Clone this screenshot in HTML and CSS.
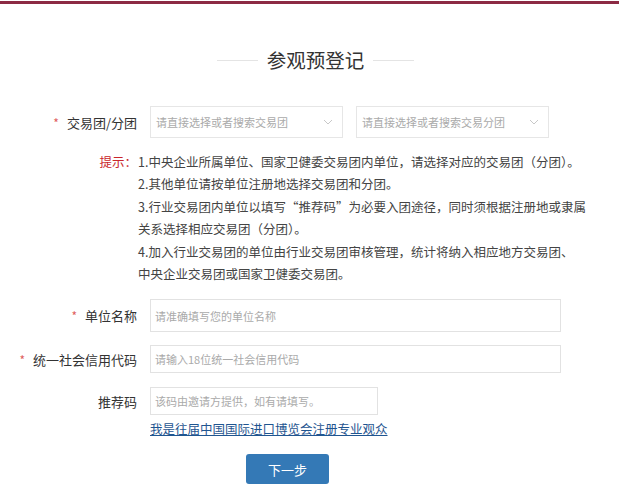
FILE: index.html
```
<!DOCTYPE html>
<html lang="zh-CN">
<head>
<meta charset="utf-8">
<title>参观预登记</title>
<link rel="stylesheet" href="styles.css">
</head>
<body>
<div class="topbar"></div>
<div class="title-wrap">
  <span class="title-line"></span>
  <h1 class="title">参观预登记</h1>
  <span class="title-line"></span>
</div>
<form class="form">
  <div class="row row-select">
    <label class="label"><span class="req">*</span>交易团/分团</label>
    <div class="select">
      <span class="ph">请直接选择或者搜索交易团</span>
      <svg class="chev" width="10" height="6" viewBox="0 0 10 6"><path d="M1 1 L5 5 L9 1" fill="none" stroke="#c8c8c8" stroke-width="1"/></svg>
    </div>
    <div class="select">
      <span class="ph">请直接选择或者搜索交易分团</span>
      <svg class="chev" width="10" height="6" viewBox="0 0 10 6"><path d="M1 1 L5 5 L9 1" fill="none" stroke="#c8c8c8" stroke-width="1"/></svg>
    </div>
  </div>
  <div class="tips">
    <div class="tips-label">提示：</div>
    <div class="tips-text">
      <p>1.中央企业所属单位、国家卫健委交易团内单位，请选择对应的交易团（分团）。</p>
      <p>2.其他单位请按单位注册地选择交易团和分团。</p>
      <p>3.行业交易团内单位以填写“推荐码”为必要入团途径，同时须根据注册地或隶属关系选择相应交易团（分团）。</p>
      <p>4.加入行业交易团的单位由行业交易团审核管理，统计将纳入相应地方交易团、<span class="nowrap">中央企业</span>交易团或国家卫健委交易团。</p>
    </div>
  </div>
  <div class="row row-name">
    <label class="label"><span class="req">*</span>单位名称</label>
    <div class="input input-wide input-tall"><span class="ph">请准确填写您的单位名称</span></div>
  </div>
  <div class="row row-code">
    <label class="label"><span class="req">*</span>统一社会信用代码</label>
    <div class="input input-wide"><span class="ph">请输入18位统一社会信用代码</span></div>
  </div>
  <div class="row row-ref">
    <label class="label">推荐码</label>
    <div class="input input-short"><span class="ph">该码由邀请方提供，如有请填写。</span></div>
  </div>
  <div class="link-row">
    <a class="link" href="#">我是往届中国国际进口博览会注册专业观众</a>
  </div>
  <div class="btn-row">
    <button type="button" class="btn">下一步</button>
  </div>
</form>
</body>
</html>
```
FILE: styles.css
```
html, body {
  margin: 0;
  padding: 0;
  background: #fff;
}
body {
  font-family: "Noto Sans CJK SC", "Noto Sans", "Liberation Sans", sans-serif;
  color: #333;
  width: 619px;
}
.topbar {
  margin-top: 1px;
  height: 3px;
  background: #8c2a44;
}
.title-wrap {
  margin-top: 44px;
  display: flex;
  justify-content: center;
  align-items: center;
  gap: 9px;
  padding-left: 12px;
}
.title-line {
  width: 41px;
  height: 1px;
  background: #e4e4e4;
}
.title {
  margin: 0;
  font-size: 19.5px;
  line-height: 24px;
  font-weight: 400;
  color: #333;
}
.form {
  margin-top: 34px;
}
.row {
  display: flex;
  align-items: center;
}
.label {
  box-sizing: border-box;
  width: 150px;
  padding-right: 13px;
  text-align: right;
  font-size: 13px;
  color: #333;
  white-space: nowrap;
}
.req {
  color: #e06060;
  margin-right: 8px;
  font-size: 12px;
}
.select {
  box-sizing: border-box;
  width: 193px;
  height: 32px;
  border: 1px solid #e6e6e6;
  margin-right: 13px;
  display: flex;
  align-items: center;
  justify-content: space-between;
  padding: 0 9px 0 5px;
}
.ph {
  font-size: 11px;
  color: #aaa;
  white-space: nowrap;
}
.chev {
  display: block;
}
.tips {
  display: flex;
  margin-top: 13px;
  font-size: 12.5px;
  line-height: 22.4px;
}
.tips-label {
  box-sizing: border-box;
  width: 137px;
  text-align: right;
  color: #c9262b;
}
.tips-text {
  width: 449px;
  margin-left: 1px;
  color: #444;
}
.tips-text p {
  margin: 0;
}
.nowrap {
  white-space: nowrap;
}
.input {
  box-sizing: border-box;
  height: 28px;
  border: 1px solid #e2e2e2;
  display: flex;
  align-items: center;
  padding-left: 4px;
}
.input-wide {
  width: 411px;
}
.input-tall {
  height: 33px;
}
.input-short {
  width: 228px;
}
.row-name {
  margin-top: 14px;
}
.row-code {
  margin-top: 13px;
}
.row-ref {
  margin-top: 14px;
}
.link-row {
  margin-top: 3px;
  padding-left: 150px;
  line-height: 18px;
}
.link {
  font-size: 12.5px;
  color: #1f5590;
  text-decoration: underline;
}
.btn-row {
  margin-top: 16px;
  padding-left: 246px;
}
.btn {
  width: 83px;
  height: 30px;
  border: none;
  border-radius: 3px;
  background: #3479b6;
  color: #fff;
  font-family: inherit;
  font-size: 13px;
  padding: 0;
}
```
